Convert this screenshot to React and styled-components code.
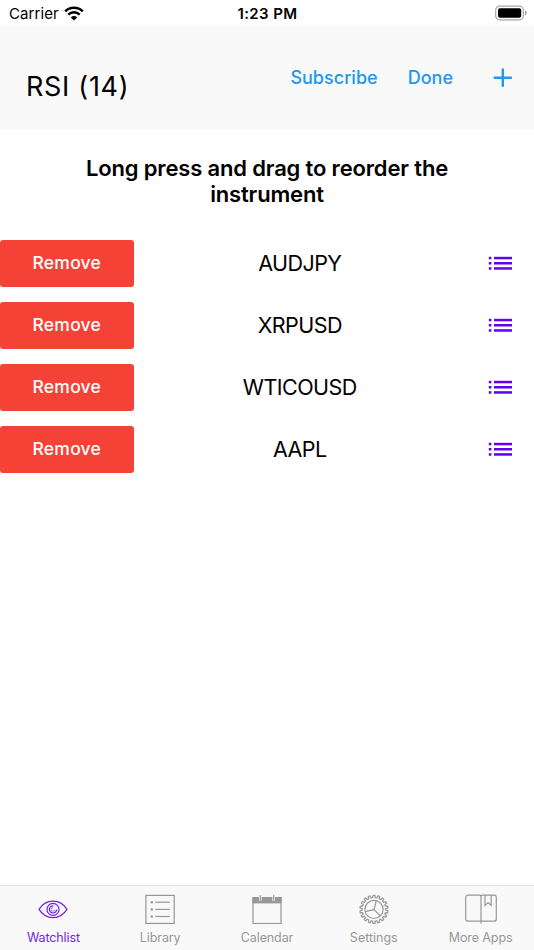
import styled, { createGlobalStyle } from "styled-components";

const GlobalStyle = createGlobalStyle`
  * {
    box-sizing: border-box;
  }
  body {
    margin: 0;
    background: #fff;
    color: #000;
    font-family: Inter, "Liberation Sans", sans-serif;
  }
  button {
    font-family: inherit;
    border: none;
    padding: 0;
    background: none;
    cursor: pointer;
  }
  svg {
    display: block;
  }
`;

const Screen = styled.div`
  display: flex;
  flex-direction: column;
  width: 534px;
  height: 950px;
  overflow: hidden;
`;

const StatusBar = styled.div`
  display: grid;
  grid-template-columns: 1fr auto 1fr;
  align-items: center;
  height: 26px;
  padding: 1px 7px 0 9px;
  font-size: 15px;
  line-height: 26px;
`;

const Carrier = styled.div`
  display: flex;
  align-items: center;
  gap: 5px;
  letter-spacing: 0.1px;

  svg {
    margin-bottom: 2px;
  }
`;

const Clock = styled.div`
  margin-right: 1px;
  font-weight: 600;
  letter-spacing: 0.4px;
`;

const Battery = styled.div`
  justify-self: end;
  padding-bottom: 2px;
`;

const Header = styled.header`
  display: flex;
  justify-content: space-between;
  height: 103px;
  padding: 0 21px 0 26px;
  background: #f9f9f9;
`;

const Title = styled.h1`
  margin: 0;
  padding-top: 44px;
  font-size: 27px;
  font-weight: 400;
  line-height: 33px;
  letter-spacing: 0.7px;
`;

const Actions = styled.div`
  display: flex;
  align-items: center;
  height: 103px;
  gap: 30px;
`;

const Action = styled.button`
  color: #2196f3;
  font-size: 18px;
  font-weight: 500;
  line-height: 24px;
  letter-spacing: 0.02px;
`;

const AddButton = styled(Action)`
  margin-left: 10px;
`;

const Content = styled.main`
  flex: 1;
`;

const Hint = styled.p`
  width: 400px;
  margin: 26px auto 33px;
  font-size: 22px;
  font-weight: 600;
  line-height: 26px;
  letter-spacing: -0.16px;
  text-align: center;
`;

const List = styled.div`
  display: flex;
  flex-direction: column;
  gap: 15.4px;
`;

const Row = styled.div`
  display: grid;
  grid-template-columns: 133.6px 1fr 68px;
  align-items: center;
  height: 46.6px;
`;

const RemoveButton = styled.button`
  height: 100%;
  padding-bottom: 1px;
  border-radius: 3px;
  background: #f44336;
  color: #fff;
  font-size: 17.5px;
  font-weight: 500;
  letter-spacing: 0.25px;
`;

const Instrument = styled.div`
  font-size: 21.5px;
  line-height: 26px;
  letter-spacing: -0.55px;
  text-align: center;
`;

const Handle = styled.div`
  display: flex;
  justify-content: center;
`;

const TabBar = styled.nav`
  display: grid;
  grid-template-columns: repeat(5, 1fr);
  height: 65px;
  border-top: 1px solid #e2e2e2;
  background: #f9f9f9;
`;

const Tab = styled.button`
  display: flex;
  flex-direction: column;
  align-items: center;
  padding-top: 8px;
  color: ${({ $active }) => ($active ? "#6f1ff0" : "#979797")};
`;

const TabLabel = styled.span`
  margin-top: 5px;
  font-size: 12.5px;
  line-height: 17px;
  letter-spacing: ${({ $spacing }) => $spacing || 0}px;
`;

function WifiIcon() {
  return (
    <svg width="20" height="15" viewBox="0 0 20 15" fill="none" stroke="#000" strokeWidth="2.5">
      <path d="M1.2 5.4a12.4 12.4 0 0 1 17.6 0" />
      <path d="M4.3 8.7a8 8 0 0 1 11.4 0" />
      <path d="M10 14.6 6.8 11.4a4.5 4.5 0 0 1 6.4 0z" fill="#000" stroke="none" />
    </svg>
  );
}

function BatteryIcon() {
  return (
    <svg width="32" height="16" viewBox="0 0 32 16">
      <rect x="0.7" y="1.2" width="27.6" height="13.6" rx="3.8" fill="none" stroke="#a6a6a6" strokeWidth="1.2" />
      <rect x="3" y="3.3" width="23.2" height="9.4" rx="2" fill="#000" />
      <path d="M30 5.6v4.8q1.8-.8 1.8-2.4T30 5.6z" fill="#a6a6a6" />
    </svg>
  );
}

function PlusIcon() {
  return (
    <svg width="20" height="20" viewBox="0 0 20 20" stroke="#2196f3" strokeWidth="2.4">
      <path d="M0.7 9.700h18.200M9.800 0.600v18.200" />
    </svg>
  );
}

function ListIcon() {
  return (
    <svg width="24" height="14" viewBox="0 0 24 14" fill="#6200ee">
      {[0.8, 6, 11.2].map((y) => (
        <g key={y}>
          <rect x="0.8" y={y} width="2.6" height="2.5" />
          <rect x="6" y={y} width="18" height="2.5" />
        </g>
      ))}
    </svg>
  );
}

function EyeIcon() {
  return (
    <svg width="30" height="30" viewBox="0 0 30 30" fill="none" stroke="currentColor" strokeWidth="1.2">
      <path d="M1 15.4C4.5 9.8 9.5 7.2 15 7.2S25.5 9.8 29 15.4C25.5 21 20.5 23.6 15 23.6S4.5 21 1 15.4z" />
      <circle cx="15" cy="15.4" r="6" />
      <path d="M15.4 11.8a3.6 3.6 0 1 0 3.2 3.6" />
      <path d="M15.2 13.6a1.8 1.8 0 1 0 1.5 1.9" strokeWidth="0.6" />
    </svg>
  );
}

function LibraryIcon() {
  return (
    <svg width="30" height="30" viewBox="0 0 30 30" fill="none" stroke="currentColor" strokeWidth="1.2">
      <rect x="0.9" y="1.4" width="28.3" height="28" />
      {[8.2, 15.4, 22.5].map((y) => (
        <g key={y}>
          <path d={`M10.3 ${y}h14.5`} />
          <circle cx="6.8" cy={y} r="1.2" fill="currentColor" stroke="none" />
        </g>
      ))}
    </svg>
  );
}

function CalendarIcon() {
  return (
    <svg width="30" height="30" viewBox="0 0 30 30" fill="none" stroke="currentColor" strokeWidth="1.2">
      <rect x="1" y="3.6" width="28" height="25.9" />
      <path d="M0.4 3h29.2v6.4H0.4z" fill="currentColor" stroke="none" />
      <path d="M8.3 1v5.7M21.7 1v5.7" stroke="#f9f9f9" strokeWidth="2.6" />
      <path d="M8.3 1v5.4M21.7 1v5.4" strokeWidth="1.2" />
    </svg>
  );
}

// toothed outline, 18 teeth
function gearPath() {
  const teeth = 18;
  const step = (Math.PI * 2) / teeth;
  const points = [];
  for (let i = 0; i < teeth; i++) {
    [
      [-0.3, 11.8],
      [-0.2, 14.1],
      [0.2, 14.1],
      [0.3, 11.8],
    ].forEach(([offset, r]) => {
      const a = (i + offset) * step - Math.PI / 2;
      points.push(`${(15 + r * Math.cos(a)).toFixed(2)} ${(15.4 + r * Math.sin(a)).toFixed(2)}`);
    });
  }
  return `M${points.join("L")}Z`;
}

function GearIcon() {
  return (
    <svg width="30" height="30" viewBox="0 0 30 30" fill="none" stroke="currentColor" strokeWidth="1.2" strokeLinejoin="round">
      <path d={gearPath()} />
      <circle cx="15" cy="15.4" r="9.1" />
      <path d="M15 15.6 17.3 6.7M15 15.6 6.3 17.7M15 15.6l6.3 6.2" />
    </svg>
  );
}

function BookIcon() {
  return (
    <svg width="32" height="30" viewBox="0 0 32 30" fill="none" stroke="currentColor" strokeWidth="1.2">
      <path d="M16 27.2H3a2.3 2.3 0 0 1-2.3-2.3V3.500A2.300 2.300 0 0 1 3 1.200h11.700q1.300 0 1.300 1.300 0-1.300 1.300-1.300H29a2.300 2.300 0 0 1 2.300 2.300v21.400a2.300 2.300 0 0 1-2.300 2.300z" />
      <path d="M16 2v27.5M20 1.2v10.2l3.1-2.9 3.1 2.9V1.2" />
    </svg>
  );
}

const instruments = ["AUDJPY", "XRPUSD", "WTICOUSD", "AAPL"];

const tabs = [
  { label: "Watchlist", icon: EyeIcon, spacing: -0.1 },
  { label: "Library", icon: LibraryIcon, spacing: -0.1 },
  { label: "Calendar", icon: CalendarIcon, spacing: -0.1 },
  { label: "Settings", icon: GearIcon },
  { label: "More Apps", icon: BookIcon, spacing: -0.1 },
];

function App() {
  return (
    <Screen>
      <GlobalStyle />
      <StatusBar>
        <Carrier>
          <span>Carrier</span>
          <WifiIcon />
        </Carrier>
        <Clock>1:23 PM</Clock>
        <Battery>
          <BatteryIcon />
        </Battery>
      </StatusBar>
      <Header>
        <Title>RSI (14)</Title>
        <Actions>
          <Action>Subscribe</Action>
          <Action>Done</Action>
          <AddButton aria-label="Add">
            <PlusIcon />
          </AddButton>
        </Actions>
      </Header>
      <Content>
        <Hint>Long press and drag to reorder the instrument</Hint>
        <List>
          {instruments.map((name) => (
            <Row key={name}>
              <RemoveButton>Remove</RemoveButton>
              <Instrument>{name}</Instrument>
              <Handle>
                <ListIcon />
              </Handle>
            </Row>
          ))}
        </List>
      </Content>
      <TabBar>
        {tabs.map(({ label, icon: Icon, spacing }, index) => (
          <Tab key={label} $active={index === 0}>
            <Icon />
            <TabLabel $spacing={spacing}>{label}</TabLabel>
          </Tab>
        ))}
      </TabBar>
    </Screen>
  );
}

export default App;
